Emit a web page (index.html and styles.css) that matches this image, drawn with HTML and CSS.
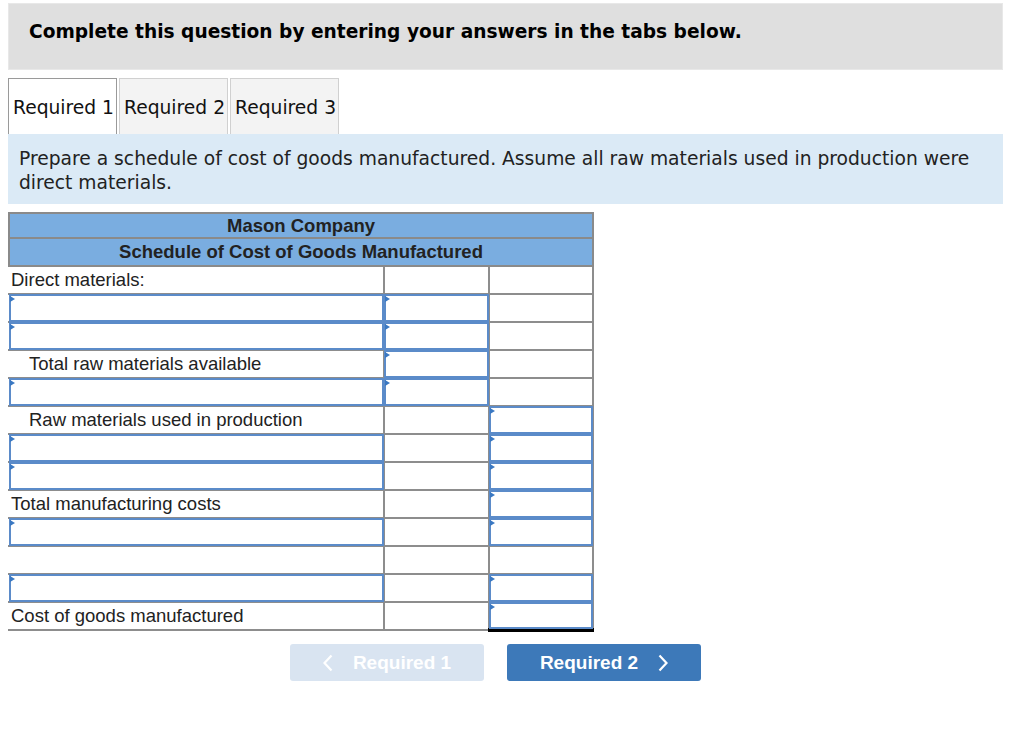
FILE: index.html
```html
<!DOCTYPE html>
<html>
<head>
<meta charset="utf-8">
<link rel="stylesheet" href="styles.css">
</head>
<body>
<div class="banner">Complete this question by entering your answers in the tabs below.</div>
<div class="tabs">
  <div class="tab active">Required 1</div>
  <div class="tab">Required 2</div>
  <div class="tab">Required 3</div>
</div>
<div class="prompt">Prepare a schedule of cost of goods manufactured. Assume all raw materials used in production were direct materials.</div>
<table class="sched">
  <colgroup><col class="c1"><col class="c2"><col class="c3"></colgroup>
  <tr class="head h1"><th colspan="3">Mason Company</th></tr>
  <tr class="head h2"><th colspan="3">Schedule of Cost of Goods Manufactured</th></tr>
  <tr><td class="lbl">Direct materials:</td><td></td><td></td></tr>
  <tr><td class="in"><div class="field"></div></td><td class="in"><div class="field"></div></td><td></td></tr>
  <tr><td class="in"><div class="field"></div></td><td class="in"><div class="field"></div></td><td></td></tr>
  <tr><td class="lbl ind">Total raw materials available</td><td class="in tot"><div class="field"></div></td><td></td></tr>
  <tr><td class="in"><div class="field"></div></td><td class="in"><div class="field"></div></td><td></td></tr>
  <tr><td class="lbl ind">Raw materials used in production</td><td class="tot"></td><td class="in"><div class="field"></div></td></tr>
  <tr><td class="in"><div class="field"></div></td><td></td><td class="in"><div class="field"></div></td></tr>
  <tr><td class="in"><div class="field"></div></td><td></td><td class="in"><div class="field"></div></td></tr>
  <tr><td class="lbl">Total manufacturing costs</td><td></td><td class="in tot"><div class="field"></div></td></tr>
  <tr><td class="in"><div class="field"></div></td><td></td><td class="in"><div class="field"></div></td></tr>
  <tr><td></td><td></td><td class="tot"></td></tr>
  <tr><td class="in"><div class="field"></div></td><td></td><td class="in"><div class="field"></div></td></tr>
  <tr class="last"><td class="lbl">Cost of goods manufactured</td><td></td><td class="in tot dbl"><div class="field"></div></td></tr>
</table>
<div class="nav">
  <button class="btn prev"><svg class="chev" width="10" height="18" viewBox="0 0 10 18"><polyline points="8.5,1.5 1.5,9 8.5,16.5" fill="none" stroke="#fff" stroke-width="2.2"/></svg><span>Required 1</span></button>
  <button class="btn next"><span>Required 2</span><svg class="chev" width="10" height="18" viewBox="0 0 10 18"><polyline points="1.5,1.5 8.5,9 1.5,16.5" fill="none" stroke="#fff" stroke-width="2.2"/></svg></button>
</div>
</body>
</html>
```

FILE: styles.css
```css
html, body {
  margin: 0;
  padding: 0;
  background: #fff;
}
body {
  padding: 3px 21px 0 8px;
  font-family: "DejaVu Sans", Verdana, sans-serif;
  color: #111;
}
.banner {
  background: #dfdfdf;
  border: 1px solid #e8e8e8;
  height: 67px;
  box-sizing: border-box;
  padding: 17px 0 0 20px;
  font-weight: bold;
  font-size: 18.6px;
  color: #000;
}
.tabs {
  display: flex;
  gap: 2px;
  margin-top: 8px;
  height: 56px;
}
.tab {
  box-sizing: border-box;
  height: 56px;
  padding: 18px 2px 0 4px;
  font-size: 18.7px;
  background: #f3f3f3;
  border: 1px solid #d0d0d0;
  border-bottom: none;
  color: #111;
}
.tab.active {
  background: #fff;
  border-color: #9a9a9a;
}
.prompt {
  background: #dbeaf6;
  height: 70px;
  box-sizing: border-box;
  padding: 13px 11px 0 11px;
  font-size: 18.7px;
  line-height: 24px;
  color: #222;
}
.sched {
  margin-top: 8px;
  border-collapse: collapse;
  width: 584px;
  table-layout: fixed;
  font-family: "Liberation Sans", Arial, sans-serif;
  font-size: 18.5px;
  line-height: 20px;
  color: #222;
}
.c1 { width: 375px; }
.c2 { width: 105px; }
.c3 { width: 104px; }
.head th {
  background: #7aade0;
  border: 2px solid #8a8a8a;
  font-weight: bold;
  text-align: center;
  padding: 0;
  color: #222;
  box-sizing: border-box;
}
.h1 { height: 25px; }
.h2 { height: 28px; }
.sched td {
  border: 2px solid #8d8d8d;
  padding: 0;
  box-sizing: border-box;
}
.sched td:first-child {
  border-left-color: transparent;
}
.sched tr { height: 28px; }
.sched tr.h1 { height: 25px; }
.sched td.lbl {
  padding-left: 1px;
  vertical-align: middle;
}
.sched td.ind {
  padding-left: 19px;
}
.sched td.in {
  position: relative;
}
.field {
  position: absolute;
  left: -1px;
  top: -1px;
  right: -1px;
  bottom: -1px;
  border: 2px solid #5b8bc9;
  background: #fff;
}
.field::before {
  content: "";
  position: absolute;
  left: -1px;
  top: 0;
  border-left: 5px solid #3a78c2;
  border-top: 3px solid transparent;
  border-bottom: 3px solid transparent;
}
.sched td.tot {
  border-top: 2px solid #000;
}
.sched tr.last td.dbl {
  border-bottom: 4px solid #000;
}
.nav {
  display: flex;
  gap: 23px;
  margin: 12px 0 0 282px;
}
.btn {
  width: 194px;
  height: 37px;
  border: none;
  border-radius: 3px;
  font-family: "Liberation Sans", Arial, sans-serif;
  font-weight: bold;
  font-size: 19px;
  color: #fff;
  padding: 0;
  display: flex;
  align-items: center;
  justify-content: center;
  gap: 20px;
}
.prev {
  background: #d9e4f1;
}
.next {
  background: #3d79b9;
}
.chev {
  display: block;
}
```
